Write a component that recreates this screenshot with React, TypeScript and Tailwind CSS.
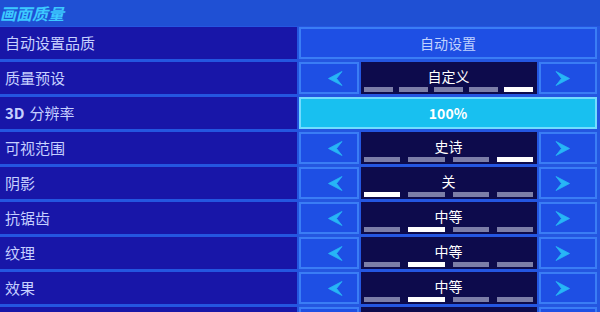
import React from "react";

type Row =
  | { label: React.ReactNode; kind: "button"; value: string }
  | { label: React.ReactNode; kind: "slider"; value: string }
  | { label: React.ReactNode; kind: "select"; value: string; steps: number; active: number };

const ROWS: Row[] = [
  { label: "自动设置品质", kind: "button", value: "自动设置" },
  { label: "质量预设", kind: "select", value: "自定义", steps: 5, active: 4 },
  {
    label: (
      <>
        <span className="mr-[5px] font-bold">3D</span>
        <span>分辨率</span>
      </>
    ),
    kind: "slider",
    value: "100%",
  },
  { label: "可视范围", kind: "select", value: "史诗", steps: 4, active: 3 },
  { label: "阴影", kind: "select", value: "关", steps: 4, active: 0 },
  { label: "抗锯齿", kind: "select", value: "中等", steps: 4, active: 1 },
  { label: "纹理", kind: "select", value: "中等", steps: 4, active: 1 },
  { label: "效果", kind: "select", value: "中等", steps: 4, active: 1 },
  { label: "", kind: "select", value: "", steps: 4, active: 1 },
];

function Chevron({ dir }: { dir: "left" | "right" }) {
  const pts = dir === "left" ? "14,0.5 0.5,7.5 14,14.5 8.5,7.5" : "1,0.5 14.5,7.5 1,14.5 6.5,7.5";
  return (
    <svg width="15" height="15" viewBox="0 0 15 15">
      <polygon points={pts} fill="#27b6f6" strokeLinejoin="round" stroke="#27b6f6" strokeWidth="0.8" />
    </svg>
  );
}

function Control({ row }: { row: Row }) {
  if (row.kind === "button") {
    return (
      <div className="flex h-full w-full items-center justify-center border-2 border-[#3a7df5] bg-[#1e4fe4] text-[14px] text-[#c0d2ff]">
        {row.value}
      </div>
    );
  }
  if (row.kind === "slider") {
    return (
      <div className="flex h-full w-full items-center justify-center border-2 border-[#72dcff] bg-[#18c0f0] text-[14px] font-bold text-white">
        {row.value}
      </div>
    );
  }
  const gap = row.steps === 5 ? "gap-[6px]" : "gap-[8px]";
  return (
    <div className="flex h-full w-full gap-[2px]">
      <div className="flex w-[60px] items-center justify-end border-2 border-[#3a7df5] bg-[#1e4fe4] pr-[14px]">
        <Chevron dir="left" />
      </div>
      <div className="flex w-[176px] flex-col items-center bg-[#0d0b4c] pl-[3px] pr-[4px]">
        <div className="h-[22px] pt-[6px] text-[14px] leading-[16px] text-white">{row.value}</div>
        <div className={`mt-auto mb-[2px] flex w-full ${gap}`}>
          {Array.from({ length: row.steps }).map((_, i) => (
            <div
              key={i}
              className={i === row.active ? "h-[5px] flex-1 bg-white" : "h-[5px] flex-1 bg-[#7c7ea8]"}
            />
          ))}
        </div>
      </div>
      <div className="flex w-[58px] items-center justify-start border-2 border-[#3a7df5] bg-[#1e4fe4] pl-[14px]">
        <Chevron dir="right" />
      </div>
    </div>
  );
}

export default function App() {
  return (
    <div
      className="h-[312px] w-[600px] overflow-hidden bg-[#2456e0]"
      style={{ fontFamily: '"Noto Sans CJK SC", "Noto Sans", sans-serif' }}
    >
      <div className="flex h-[26px] items-center bg-[#1f50d4]">
        <span className="text-[16px] font-bold italic leading-[20px] text-[#3cc9ff]">画面质量</span>
      </div>
      <div className="mt-[1px] flex flex-col gap-[3px]">
        {ROWS.map((row, i) => (
          <div key={i} className="flex h-[32px] gap-[2px]">
            <div className="flex w-[297px] items-center bg-[#1816a8] pl-[5px] text-[15px] text-[#c6d0ff]">
              {row.label}
            </div>
            <div className="w-[298px]">
              <Control row={row} />
            </div>
          </div>
        ))}
      </div>
    </div>
  );
}
